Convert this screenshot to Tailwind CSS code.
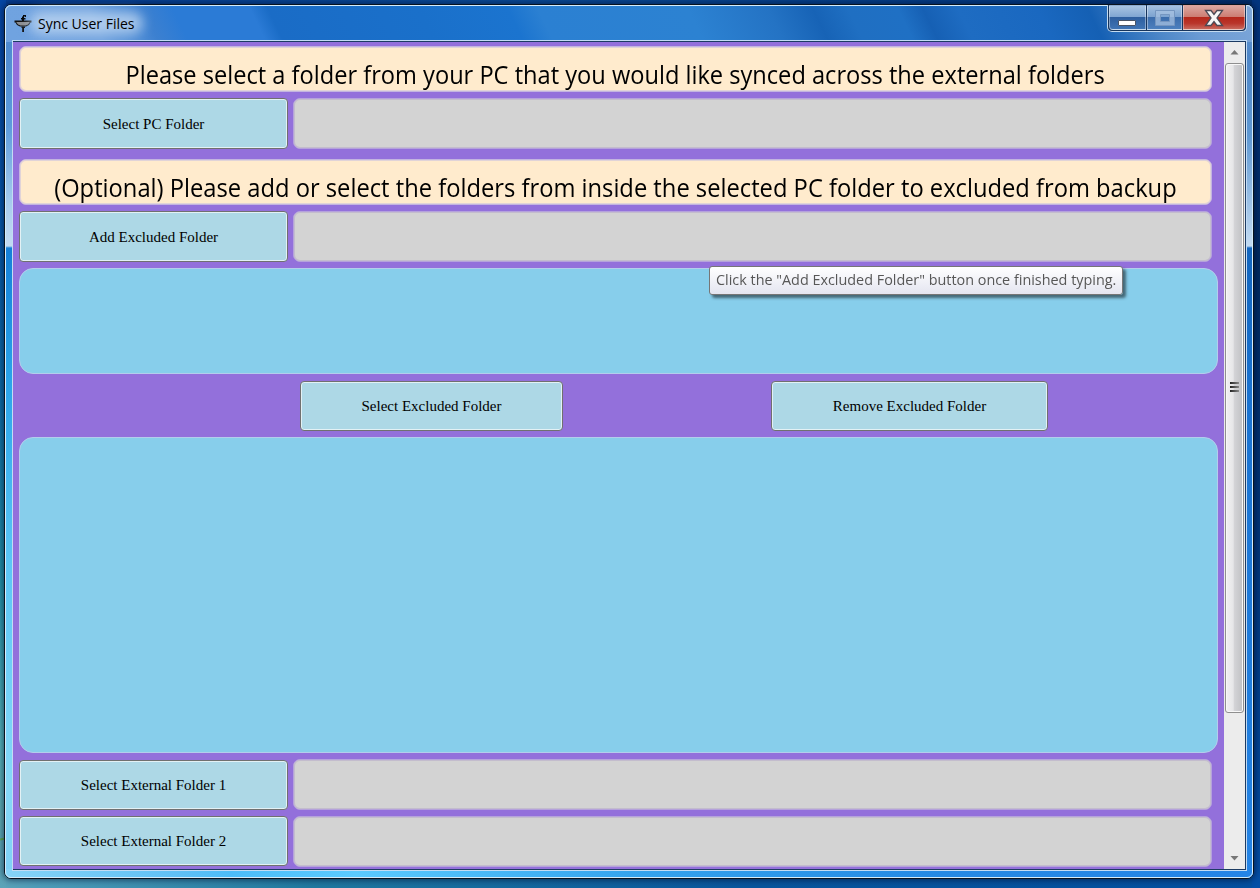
<!DOCTYPE html>
<html lang="en">
<head>
<meta charset="utf-8">
<title>Sync User Files</title>
<script src="https://cdn.jsdelivr.net/npm/@tailwindcss/browser@4"></script>
</head>
<body class="w-[1260px] h-[888px] overflow-hidden bg-[linear-gradient(90deg,#5aa3b8_0%,#4d9cb8_3%,#1f789f_25%,#08559c_60%,#034f9f_100%)]">
<div class="relative w-[1260px] h-[888px] overflow-hidden pt-[4px] pl-[4px]">
  <!-- desktop edges -->
  <div class="absolute left-0 top-0 w-[1260px] h-[6px] bg-[linear-gradient(90deg,#053f94,#0a4d9a_40%,#033c85_80%,#022f6c)]"></div>
  <div class="absolute left-0 top-0 w-[6px] h-[888px] bg-[linear-gradient(180deg,#0547a5_0%,#0557a8_25%,#0d6da5_45%,#2292a8_65%,#56b5bb_84%,#5faeb6_92%,#5aa3b8_100%)]"></div>
  <div class="absolute left-[1252px] top-0 w-[8px] h-[888px] bg-[linear-gradient(180deg,#033680_0%,#012a60_30%,#023578_60%,#034fa6_100%)]"></div>
  <div class="absolute left-0 top-[838px] w-[5px] h-[2px] bg-[#5fae4e] -rotate-12"></div>

  <!-- window frame -->
  <div class="relative w-[1250px] h-[875px] rounded-[7px] border border-[#08131f] shadow-[0_0_6px_1px_rgba(0,10,40,0.6)] bg-[linear-gradient(180deg,#6a9fdc_0px,#4e8bd0_40px,#5c9bdc_120px,#a9cdee_200px,#c3dbf2_241px,#1580d8_243px,#2ba5ea_380px,#5cc6f6_560px,#86d8f8_780px,#7fd0f6_100%)]">
    <div class="absolute right-0 top-0 w-[9px] h-full rounded-r-[6px] bg-[linear-gradient(180deg,#6f9fd6_0px,#4e86c8_50px,#5f98d2_130px,#c3dbf2_241px,#1366bf_243px,#1b74d2_400px,#2484e6_100%)]"></div>
    <div class="absolute left-[1px] bottom-0 w-[1247px] h-[9px] rounded-b-[6px] bg-[linear-gradient(90deg,#86d4f8_0%,#5fc0f5_14%,#4cbdf9_18%,#5bcbff_28%,#35a4ee_50%,#2489e4_75%,#2484e6_100%)]"></div>
    <div class="absolute left-0 top-0 w-[1248px] h-[37px] rounded-t-[6px] overflow-hidden">
      <div class="absolute -left-[20px] top-0 w-[1300px] h-full skew-x-[26deg] bg-[linear-gradient(90deg,#70a3e0_20px,#6fa2df_110px,#3c80d0_165px,#2b7bd6_195px,#2b7bd6_272px,#1a6cc6_290px,#1a70ca_440px,#1b74cf_530px,#2b80d2_560px,#2c82d2_710px,#2473c4_790px,#1763b6_835px,#1f6fc2_870px,#1f70c4_920px,#1660b4_945px,#1e6cc2_980px,#1a68c0_1060px,#1560b4_1110px,#4d87c8_1170px,#6b9bd4_1210px,#7ba5d8_1268px)]"></div>
    </div>
    <div class="absolute inset-0 rounded-[6px] border border-[#d4ecfb]"></div>

    <!-- title bar -->
    <div class="relative h-[35px] flex justify-between">
      <div class="flex items-center pl-[9px] pt-[1px]">
        <svg width="18" height="18" viewBox="0 0 18 18">
          <path d="M8 7V2.500h1V1h3v2h-1v-.5h-1V7z" fill="#000"/>
          <path d="M7 4h4.500v1.500H7z" fill="#000"/>
          <path d="M0.500 6.500h17v2h-1L15 11l-3 1.500H6L3 11 1.500 8.500h-1z" fill="#111"/>
          <path d="M2.200 8h13.600L14 10.600l-2.500 1H6.500L4 10.600z" fill="#8b8d90"/>
          <path d="M7.500 12.500h3.500V14h-1v4H8.200v-4h-.7z" fill="#111"/>
        </svg>
        <div class="relative ml-[6px] pt-[2px]">
          <div class="absolute -left-2 -right-2 top-0 bottom-0 rounded-full bg-[#c4d9f2]/75 blur-[6px]"></div>
          <span class="relative block whitespace-nowrap font-['Open_Sans',sans-serif] text-[14px] leading-[20px] text-black">Sync User Files</span>
        </div>
      </div>
      <div class="mr-[6px] h-[27px] w-[140px] flex rounded-b-[5px] border border-[#c4dbf0] border-t-0 p-[1px] pt-0 bg-[#16345c]">
        <div class="w-[37px] rounded-bl-[4px] border border-white/40 bg-[linear-gradient(180deg,#a8c4e2_0%,#7ea5d2_48%,#2e5f9f_50%,#3f74b4_100%)] flex items-end justify-center pb-[3px] pr-[2px]">
          <div class="w-[18px] h-[6px] shrink-0 rounded-[1px] bg-white border border-[#4a5566]"></div>
        </div>
        <div class="ml-px w-[35px] border border-white/40 bg-[linear-gradient(180deg,#a3c0e0_0%,#7ba2d0_48%,#3c6dac_50%,#4d80be_100%)] flex items-center justify-center">
          <svg width="20" height="16" viewBox="0 0 20 16"><path d="M0.500 0.500h19v15h-19zM5.500 4.500v7h9v-7z" fill="#a5c0e0" fill-opacity=".75" fill-rule="evenodd" stroke="#7596c0"/></svg>
        </div>
        <div class="ml-px flex-1 rounded-br-[4px] border border-white/40 bg-[linear-gradient(180deg,#dba79f_0%,#cd7e73_46%,#b5281b_50%,#b9352a_75%,#c8685c_100%)] flex items-center justify-center">
          <svg width="20" height="18" viewBox="0 0 20 18"><path d="M1.500 1.500H7L10 5.500l3-4h5.500L13 9l5.500 7.500H13L10 12.500l-3 4H1.500L7 9z" fill="#f6f6f6" stroke="#4c4a55" stroke-width="1.300"/></svg>
        </div>
      </div>
    </div>

    <!-- client area -->
    <div class="relative ml-[7px] w-[1235px] h-[831px] border border-[#c3dcf4]">
      <div class="w-[1233px] h-[829px] border-y border-r border-[#1c3b63] flex bg-[#9370db]">
        <main class="w-[1211px] pl-[6px] pt-[4px]">
          <div class="w-[1193px] h-[46px] rounded-[7px] border border-[#c3b4e0] shadow-[inset_0_0_0_1px_#e0d3d8] bg-[#ffebcd] flex justify-center overflow-hidden">
            <span class="shrink-0 scale-x-[0.945] whitespace-nowrap pt-[9px] font-['Open_Sans',sans-serif] text-[25px] leading-[36px] text-black">Please select a folder from your PC that you would like synced across the external folders</span>
          </div>
          <div class="mt-[6px] flex gap-[5px]">
            <button class="w-[269px] h-[51px] pt-px rounded-[4px] border border-[#707070] shadow-[inset_0_0_0_1px_#e3f1f5] bg-[#add8e6] font-['Liberation_Serif',serif] text-[15px] text-black">Select PC Folder</button>
            <div class="w-[919px] h-[51px] rounded-[7px] border border-[#b5a2dc] shadow-[inset_0_0_0_1px_#c3bccd] bg-[#d3d3d3]"></div>
          </div>
          <div class="mt-[10px] w-[1193px] h-[46px] rounded-[7px] border border-[#c3b4e0] shadow-[inset_0_0_0_1px_#e0d3d8] bg-[#ffebcd] flex justify-center overflow-hidden">
            <span class="shrink-0 scale-x-[0.949] whitespace-nowrap pt-[9px] font-['Open_Sans',sans-serif] text-[25px] leading-[36px] text-black">(Optional) Please add or select the folders from inside the selected PC folder to excluded from backup</span>
          </div>
          <div class="mt-[6px] flex gap-[5px]">
            <button class="w-[269px] h-[51px] pt-px rounded-[4px] border border-[#707070] shadow-[inset_0_0_0_1px_#e3f1f5] bg-[#add8e6] font-['Liberation_Serif',serif] text-[15px] text-black">Add Excluded Folder</button>
            <div class="w-[919px] h-[51px] rounded-[7px] border border-[#b5a2dc] shadow-[inset_0_0_0_1px_#c3bccd] bg-[#d3d3d3]"></div>
          </div>
          <div class="mt-[6px] w-[1199px] h-[106px] rounded-[14px] border border-[#b4cdec] bg-[#87ceeb]"></div>
          <div class="mt-[7px] pl-[281px] flex gap-[208px]">
            <button class="w-[263px] h-[50px] rounded-[4px] border border-[#707070] shadow-[inset_0_0_0_1px_#e3f1f5] bg-[#add8e6] font-['Liberation_Serif',serif] text-[15px] text-black">Select Excluded Folder</button>
            <button class="w-[277px] h-[50px] rounded-[4px] border border-[#707070] shadow-[inset_0_0_0_1px_#e3f1f5] bg-[#add8e6] font-['Liberation_Serif',serif] text-[15px] text-black">Remove Excluded Folder</button>
          </div>
          <div class="mt-[6px] w-[1199px] h-[316px] rounded-[14px] border border-[#b4cdec] bg-[#87ceeb]"></div>
          <div class="mt-[6px] flex gap-[5px]">
            <button class="mt-[1px] w-[269px] h-[50px] rounded-[4px] border border-[#707070] shadow-[inset_0_0_0_1px_#e3f1f5] bg-[#add8e6] font-['Liberation_Serif',serif] text-[15px] text-black">Select External Folder 1</button>
            <div class="w-[919px] h-[51px] rounded-[7px] border border-[#b5a2dc] shadow-[inset_0_0_0_1px_#c3bccd] bg-[#d3d3d3]"></div>
          </div>
          <div class="mt-[6px] flex gap-[5px]">
            <button class="w-[269px] h-[50px] rounded-[4px] border border-[#707070] shadow-[inset_0_0_0_1px_#e3f1f5] bg-[#add8e6] font-['Liberation_Serif',serif] text-[15px] text-black">Select External Folder 2</button>
            <div class="w-[919px] h-[51px] rounded-[7px] border border-[#b5a2dc] shadow-[inset_0_0_0_1px_#c3bccd] bg-[#d3d3d3]"></div>
          </div>
        </main>
        <!-- scroll bar -->
        <div class="w-[21px] bg-[#ececec] flex flex-col items-center">
          <svg class="h-[21px] w-[9px] shrink-0" viewBox="0 0 9 21"><path d="M0.500 12.500L4.500 8l4 4.500z" fill="#777"/></svg>
          <div class="w-[19px] h-[650px] shrink-0 rounded-[3px] border border-[#8f8f8f] shadow-[inset_0_0_0_1px_#f8f8f8] bg-[linear-gradient(90deg,#f2f2f2_0%,#e6e6e8_42%,#d3d3d6_50%,#bfc0c3_100%)] flex items-center justify-center">
            <div class="flex flex-col gap-[2px] pr-px pb-[2px]">
              <div class="w-[9px] h-[2px] bg-[linear-gradient(90deg,#222,#888)]"></div>
              <div class="w-[9px] h-[2px] bg-[linear-gradient(90deg,#222,#888)]"></div>
              <div class="w-[9px] h-[2px] bg-[linear-gradient(90deg,#222,#888)]"></div>
            </div>
          </div>
          <svg class="mt-[135px] h-[21px] w-[9px] shrink-0" viewBox="0 0 9 21"><path d="M0.500 8L4.500 12.500l4-4.500z" fill="#777"/></svg>
        </div>
      </div>
    </div>
  </div>

  <!-- tooltip -->
  <div class="absolute left-[709px] top-[266px] w-[414px] h-[29px] rounded-[3px] border border-[#767676] bg-[linear-gradient(180deg,#ffffff,#e4e5f0)] shadow-[3px_3px_3px_rgba(0,0,0,0.5)] flex items-center pl-[6px] pb-[3px]">
    <span class="shrink-0 origin-left scale-x-[0.959] whitespace-nowrap font-['Open_Sans',sans-serif] text-[15px] leading-[22px] text-[#575757]">Click the "Add Excluded Folder" button once finished typing.</span>
  </div>
</div>
</body>
</html>
